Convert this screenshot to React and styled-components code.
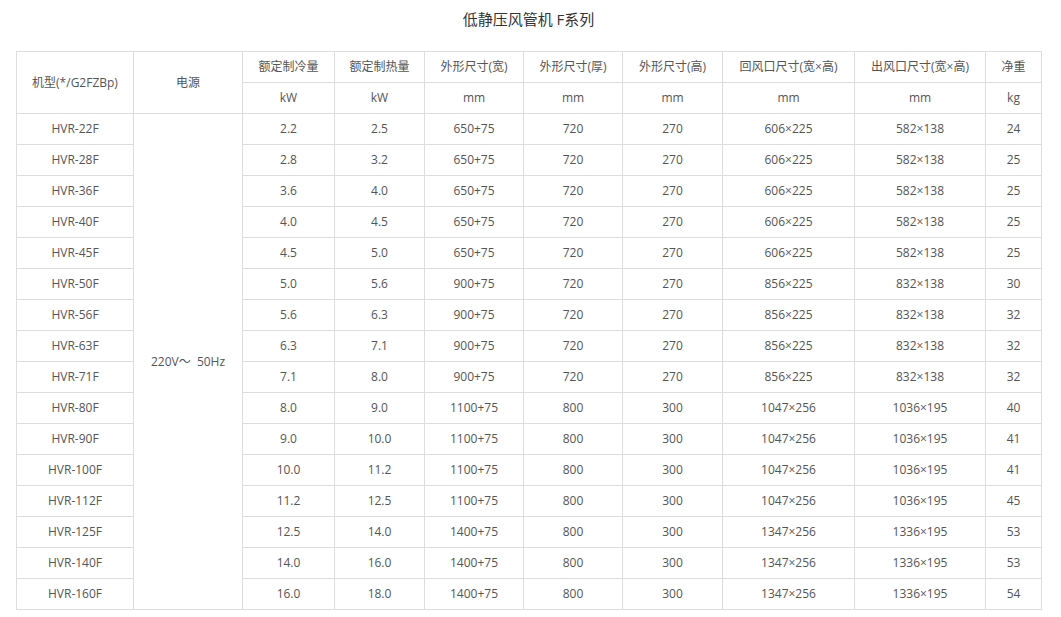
import React from "react";
import styled, { createGlobalStyle } from "styled-components";

const Global = createGlobalStyle`
  body { margin: 0; background: #fff; font-family: "Open Sans", "Noto Sans CJK SC", sans-serif; }
`;
const Page = styled.div`padding: 9px 16px 0 16px; width: 1025px;`;
const Title = styled.h1`
  margin: 0 0 22px; text-align: center; font-size: 15px; font-weight: 400; color: #333; line-height: 20px;
`;
const Table = styled.table`
  border-collapse: collapse; table-layout: fixed; width: 1025px; color: #555; font-size: 12px;
`;
const Cell = styled.td`
  border: 1px solid #ddd; height: 30px; padding: 0; text-align: center; line-height: 16px;
`;

const widths = [117, 109, 92, 90, 99, 99, 100, 132, 131, 56];
const rows = [
  ["HVR-22F","2.2","2.5","650+75","720","270","606×225","582×138","24"],
  ["HVR-28F","2.8","3.2","650+75","720","270","606×225","582×138","25"],
  ["HVR-36F","3.6","4.0","650+75","720","270","606×225","582×138","25"],
  ["HVR-40F","4.0","4.5","650+75","720","270","606×225","582×138","25"],
  ["HVR-45F","4.5","5.0","650+75","720","270","606×225","582×138","25"],
  ["HVR-50F","5.0","5.6","900+75","720","270","856×225","832×138","30"],
  ["HVR-56F","5.6","6.3","900+75","720","270","856×225","832×138","32"],
  ["HVR-63F","6.3","7.1","900+75","720","270","856×225","832×138","32"],
  ["HVR-71F","7.1","8.0","900+75","720","270","856×225","832×138","32"],
  ["HVR-80F","8.0","9.0","1100+75","800","300","1047×256","1036×195","40"],
  ["HVR-90F","9.0","10.0","1100+75","800","300","1047×256","1036×195","41"],
  ["HVR-100F","10.0","11.2","1100+75","800","300","1047×256","1036×195","41"],
  ["HVR-112F","11.2","12.5","1100+75","800","300","1047×256","1036×195","45"],
  ["HVR-125F","12.5","14.0","1400+75","800","300","1347×256","1336×195","53"],
  ["HVR-140F","14.0","16.0","1400+75","800","300","1347×256","1336×195","53"],
  ["HVR-160F","16.0","18.0","1400+75","800","300","1347×256","1336×195","54"],
];
const heads = ["额定制冷量","额定制热量","外形尺寸(宽)","外形尺寸(厚)","外形尺寸(高)","回风口尺寸(宽×高)","出风口尺寸(宽×高)","净重"];
const units = ["kW","kW","mm","mm","mm","mm","mm","kg"];

export default function App() {
  return (
    <Page>
      <Global />
      <Title>低静压风管机 F系列</Title>
      <Table>
        <colgroup>{widths.map((w, i) => <col key={i} style={{ width: w }} />)}</colgroup>
        <tbody>
          <tr>
            <Cell rowSpan={2}>机型(*/G2FZBp)</Cell>
            <Cell rowSpan={2}>电源</Cell>
            {heads.map(h => <Cell key={h}>{h}</Cell>)}
          </tr>
          <tr>{units.map((u, i) => <Cell key={i}>{u}</Cell>)}</tr>
          {rows.map((r, i) => (
            <tr key={r[0]}>
              <Cell>{r[0]}</Cell>
              {i === 0 && <Cell rowSpan={16}>220V～&nbsp;&nbsp;50Hz</Cell>}
              {r.slice(1).map((v, j) => <Cell key={j}>{v}</Cell>)}
            </tr>
          ))}
        </tbody>
      </Table>
    </Page>
  );
}
